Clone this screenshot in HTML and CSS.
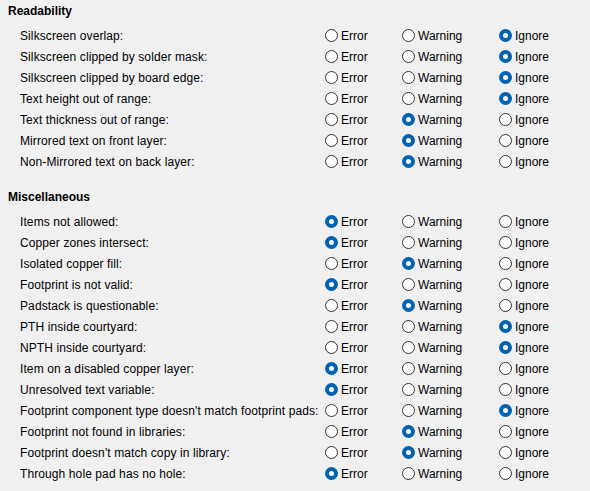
FILE: index.html
```html
<!DOCTYPE html>
<html>
<head>
<meta charset="utf-8">
<link rel="stylesheet" href="styles.css">
</head>
<body>
<div class="panel">
  <section class="group">
    <h3 class="group-title">Readability</h3>
    <div class="rows">
      <div class="row"><span class="label">Silkscreen overlap:</span><span class="opt"><i class="radio"></i>Error</span><span class="opt"><i class="radio"></i>Warning</span><span class="opt"><i class="radio on"></i>Ignore</span></div>
      <div class="row"><span class="label">Silkscreen clipped by solder mask:</span><span class="opt"><i class="radio"></i>Error</span><span class="opt"><i class="radio"></i>Warning</span><span class="opt"><i class="radio on"></i>Ignore</span></div>
      <div class="row"><span class="label">Silkscreen clipped by board edge:</span><span class="opt"><i class="radio"></i>Error</span><span class="opt"><i class="radio"></i>Warning</span><span class="opt"><i class="radio on"></i>Ignore</span></div>
      <div class="row"><span class="label">Text height out of range:</span><span class="opt"><i class="radio"></i>Error</span><span class="opt"><i class="radio"></i>Warning</span><span class="opt"><i class="radio on"></i>Ignore</span></div>
      <div class="row"><span class="label">Text thickness out of range:</span><span class="opt"><i class="radio"></i>Error</span><span class="opt"><i class="radio on"></i>Warning</span><span class="opt"><i class="radio"></i>Ignore</span></div>
      <div class="row"><span class="label">Mirrored text on front layer:</span><span class="opt"><i class="radio"></i>Error</span><span class="opt"><i class="radio on"></i>Warning</span><span class="opt"><i class="radio"></i>Ignore</span></div>
      <div class="row"><span class="label">Non-Mirrored text on back layer:</span><span class="opt"><i class="radio"></i>Error</span><span class="opt"><i class="radio on"></i>Warning</span><span class="opt"><i class="radio"></i>Ignore</span></div>
    </div>
  </section>
  <section class="group">
    <h3 class="group-title">Miscellaneous</h3>
    <div class="rows">
      <div class="row"><span class="label">Items not allowed:</span><span class="opt"><i class="radio on"></i>Error</span><span class="opt"><i class="radio"></i>Warning</span><span class="opt"><i class="radio"></i>Ignore</span></div>
      <div class="row"><span class="label">Copper zones intersect:</span><span class="opt"><i class="radio on"></i>Error</span><span class="opt"><i class="radio"></i>Warning</span><span class="opt"><i class="radio"></i>Ignore</span></div>
      <div class="row"><span class="label">Isolated copper fill:</span><span class="opt"><i class="radio"></i>Error</span><span class="opt"><i class="radio on"></i>Warning</span><span class="opt"><i class="radio"></i>Ignore</span></div>
      <div class="row"><span class="label">Footprint is not valid:</span><span class="opt"><i class="radio on"></i>Error</span><span class="opt"><i class="radio"></i>Warning</span><span class="opt"><i class="radio"></i>Ignore</span></div>
      <div class="row"><span class="label">Padstack is questionable:</span><span class="opt"><i class="radio"></i>Error</span><span class="opt"><i class="radio on"></i>Warning</span><span class="opt"><i class="radio"></i>Ignore</span></div>
      <div class="row"><span class="label">PTH inside courtyard:</span><span class="opt"><i class="radio"></i>Error</span><span class="opt"><i class="radio"></i>Warning</span><span class="opt"><i class="radio on"></i>Ignore</span></div>
      <div class="row"><span class="label">NPTH inside courtyard:</span><span class="opt"><i class="radio"></i>Error</span><span class="opt"><i class="radio"></i>Warning</span><span class="opt"><i class="radio on"></i>Ignore</span></div>
      <div class="row"><span class="label">Item on a disabled copper layer:</span><span class="opt"><i class="radio on"></i>Error</span><span class="opt"><i class="radio"></i>Warning</span><span class="opt"><i class="radio"></i>Ignore</span></div>
      <div class="row"><span class="label">Unresolved text variable:</span><span class="opt"><i class="radio on"></i>Error</span><span class="opt"><i class="radio"></i>Warning</span><span class="opt"><i class="radio"></i>Ignore</span></div>
      <div class="row"><span class="label">Footprint component type doesn't match footprint pads:</span><span class="opt"><i class="radio"></i>Error</span><span class="opt"><i class="radio"></i>Warning</span><span class="opt"><i class="radio on"></i>Ignore</span></div>
      <div class="row"><span class="label">Footprint not found in libraries:</span><span class="opt"><i class="radio"></i>Error</span><span class="opt"><i class="radio on"></i>Warning</span><span class="opt"><i class="radio"></i>Ignore</span></div>
      <div class="row"><span class="label">Footprint doesn't match copy in library:</span><span class="opt"><i class="radio"></i>Error</span><span class="opt"><i class="radio on"></i>Warning</span><span class="opt"><i class="radio"></i>Ignore</span></div>
      <div class="row"><span class="label">Through hole pad has no hole:</span><span class="opt"><i class="radio on"></i>Error</span><span class="opt"><i class="radio"></i>Warning</span><span class="opt"><i class="radio"></i>Ignore</span></div>
    </div>
  </section>
</div>
</body>
</html>
```

FILE: styles.css
```css
html, body {
  margin: 0;
  padding: 0;
  background: #f0f0f0;
}
body {
  font-family: "Liberation Sans", Arial, sans-serif;
  font-size: 12px;
  color: #000;
}
.panel {
  display: flex;
  flex-direction: column;
  gap: 15px;
  padding-top: 1px;
}
.group-title {
  margin: 0;
  padding-left: 8px;
  height: 20px;
  line-height: 20px;
  font-size: 12px;
  font-weight: bold;
}
.rows {
  display: flex;
  flex-direction: column;
  padding-top: 4px;
}
.row {
  display: grid;
  grid-template-columns: 305px 77px 97px 1fr;
  height: 21px;
  align-items: center;
  padding-left: 20px;
}
.label {
  white-space: nowrap;
  letter-spacing: 0.1px;
}
.opt {
  display: flex;
  align-items: center;
  gap: 3px;
}
.radio {
  display: inline-block;
  box-sizing: border-box;
  width: 13px;
  height: 13px;
  border-radius: 50%;
  border: 1px solid #333;
  background: #fff;
}
.radio.on {
  border: 4px solid #0063b1;
  background: #fff;
}
```
